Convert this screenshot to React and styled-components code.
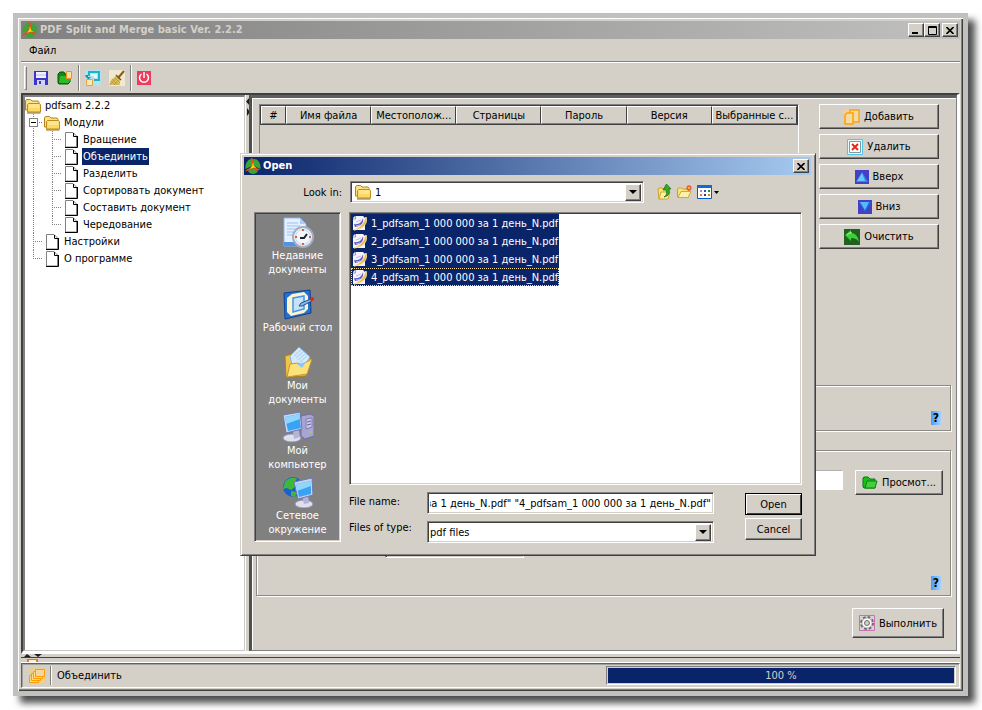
import { useEffect, useRef, useState } from "react";
import styled, { createGlobalStyle, css } from "styled-components";

const tree = [
  { name: "Модули", level: 1, folder: true },
  { name: "Вращение", level: 2 },
  { name: "Объединить", level: 2 },
  { name: "Разделить", level: 2 },
  { name: "Сортировать документ", level: 2 },
  { name: "Составить документ", level: 2 },
  { name: "Чередование", level: 2, last: true },
  { name: "Настройки", level: 1 },
  { name: "О программе", level: 1, last: true },
];

const columns = [
  "#",
  "Имя файла",
  "Местополож...",
  "Страницы",
  "Пароль",
  "Версия",
  "Выбранные с...",
];

const files = [1, 2, 3, 4].map((n) => `${n}_pdfsam_1 000 000 за 1 день_N.pdf`);

/* ---------- icons ---------- */

const Logo = () => (
  <svg width="16" height="16" viewBox="0 0 16 16">
    <path d="M7 1C3 1 0 5 .5 11L7 8zM9 1c4 0 7 4 6.500 10L9 8zM3 13c2 4 8 4 10 0L8 9.500z" fill="#3fa336" />
    <path d="M5.500 .5c2-.5 3.500 0 3.500 2V7l1 2 5 2.500c-2 1.500-4 1-5 .5L8 10l-3 2.500c-2 0-3.500 0-4.500 1.500C.5 12 2 11 4 10.500L6.500 8 7 3c0-1-.5-2-1.500-2.500z" fill="#d9531a" />
    <path d="M8 4l.8 4 2.700 2-3-.6L5 11l2.200-3z" fill="#ffe800" />
  </svg>
);

const Folder = () => (
  <svg width="16" height="16" viewBox="0 0 16 16">
    <path d="M.5 12V3l1-1.500h4L7 3h6l1 1.500V12z" fill="#fbe28a" stroke="#b08416" />
    <path d="M2.500 14V6.500l1-1H14l1.500 1V14z" fill="#fdd865" stroke="#c08d18" />
    <path d="M4 7h10.500M4 9h10.500" stroke="#fff3b8" />
    <path d="M2 15h13.500" stroke="#8c6a1c" />
  </svg>
);

const Page = () => (
  <svg width="16" height="16" viewBox="0 0 16 16">
    <path d="M2.500 15V.5H10l3.500 3.500v11z" fill="#fff" stroke="#808080" />
    <path d="M10.500 1v3.500h3.500M14.500 4v11.500H2" fill="none" stroke="#000" />
  </svg>
);

const Save = () => (
  <svg width="16" height="16" viewBox="0 0 16 16">
    <path d="M1 1h14v14H1z" fill="#3c35c8" />
    <path d="M3 2h10v6H3z" fill="#eef0ff" />
    <path d="M4 10h8v5H4z" fill="#cfd4f4" />
    <path d="M6 11h2v3H6z" fill="#3c35c8" />
    <path d="M3 5h10" stroke="#b8bcec" />
  </svg>
);

const OpenEnv = () => (
  <svg width="16" height="16" viewBox="0 0 16 16">
    <path d="M1 4l2-2h4l1 2h5v8l-2 2H2l-1-1z" fill="#0f8a12" stroke="#06570a" />
    <path d="M3 6h11l-2 7H2z" fill="#2fb82a" />
    <path d="M9.500 1.500h5v7h-5z" fill="#fbe0a8" stroke="#ff8c1a" />
  </svg>
);

const Restore = () => (
  <svg width="16" height="16" viewBox="0 0 16 16">
    <path d="M0 0h16v16H0z" fill="#b4e2e6" />
    <path d="M3 1h12v10H9V9h4V3H5v3H3z" fill="#19b4d0" />
    <path d="M6 4h6v4H9V6H6z" fill="#e2f8fa" />
    <path d="M1 5h2v2h3L3.500 9.500 0 6z" fill="#1e8fb8" />
    <path d="M1.500 9.500h6v6h-6z" fill="#fbe6bc" stroke="#e8a23a" />
  </svg>
);

const Broom = () => (
  <svg width="16" height="16" viewBox="0 0 16 16">
    <path d="M0 0h16v16H0z" fill="#efe9d0" />
    <path d="M15 1l-6 7" stroke="#8a5a18" strokeWidth="2" />
    <path d="M7 6l4 4v5H0l2-5z" fill="#dcc05c" />
    <path d="M7 5l5 5" stroke="#7a5410" strokeWidth="1.500" />
    <path d="M3 9l6 6M2 11l4 4M6 8l5 5M1 15l6-7M5 15l4-5" stroke="#a8893a" strokeWidth=".6" />
  </svg>
);

const Power = () => (
  <svg width="14" height="14" viewBox="0 0 14 14">
    <path d="M0 0h14v14H0z" fill="#ee3a5c" />
    <path d="M4.500 3a4.500 4.500 0 1 0 5 0M7 1v6" fill="none" stroke="#fff" strokeWidth="1.500" />
  </svg>
);

const AddIcon = () => (
  <svg width="16" height="16" viewBox="0 0 16 16">
    <path d="M0 0h8v8H0z" fill="#f5cda0" />
    <path d="M6 1h9v12H6z" fill="#f3dba4" stroke="#f7a21b" strokeWidth="1.500" />
    <path d="M1 6l2-2h6v11H1z" fill="#f3dba4" stroke="#ffa200" strokeWidth="1.500" />
  </svg>
);

const RemoveIcon = () => (
  <svg width="16" height="16" viewBox="0 0 16 16">
    <path d="M.5.5h15v15H.5z" fill="#e8fafc" stroke="#4fc6e6" />
    <path d="M2.500 2.500h11v11h-11z" fill="#fff" stroke="#7f9aa2" />
    <path d="M5 5l6 6M11 5l-6 6" stroke="#e8281e" strokeWidth="2" />
  </svg>
);

const UpIcon = () => (
  <svg width="14" height="14" viewBox="0 0 14 14">
    <path d="M0 0h14v14H0z" fill="#4340c4" />
    <path d="M7 2l6 10H1z" fill="#2d8cf0" />
    <path d="M7 3l3 8H2z" fill="#6cc4fc" />
  </svg>
);

const DownIcon = () => (
  <svg width="14" height="14" viewBox="0 0 14 14">
    <path d="M0 0h14v14H0z" fill="#4340c4" />
    <path d="M7 12l6-10H1z" fill="#1d6fe0" />
    <path d="M7 10L2 2h9z" fill="#5ab8fa" />
  </svg>
);

const ClearIcon = () => (
  <svg width="16" height="16" viewBox="0 0 16 16">
    <path d="M0 0h16v16H0z" fill="#22601f" />
    <path d="M1 6l6-5v3c4 0 7 3 8 9-2-3-4-4-8-4v3z" fill="#3ccf3a" />
    <path d="M3 6l4-3v2" stroke="#a4f49a" fill="none" />
  </svg>
);

const BrowseIcon = () => (
  <svg width="16" height="16" viewBox="0 0 16 16">
    <path d="M1 3l1-1h4l2 2h5v9H2l-1-1z" fill="#16c016" stroke="#0a7a10" />
    <path d="M5 6h10l-2 7H3z" fill="#45ce3c" stroke="#0b8212" />
  </svg>
);

const GearIcon = () => (
  <svg width="16" height="16" viewBox="0 0 16 16">
    <path d="M.5.5h15v15H.5z" fill="#d9d3d6" stroke="#cc6fb4" />
    <circle cx="8" cy="8" r="6" fill="none" stroke="#6a6a6a" strokeWidth="2" strokeDasharray="2.700 2" />
    <circle cx="8" cy="8" r="5" fill="#fff" stroke="#8a8a8a" strokeWidth=".6" />
    <circle cx="8" cy="8" r="2.500" fill="#d4d0c8" stroke="#6a6a6a" />
  </svg>
);

const StatusIcon = () => (
  <svg width="16" height="16" viewBox="0 0 16 16">
    <path d="M0 0h16v16H0z" fill="#ead08a" />
    <path d="M.5 7.500h9v7h-9z" fill="#ffd98a" stroke="#ff9d00" />
    <path d="M2.500 5.500h9v7h-9z" fill="#ffd98a" stroke="#ff9d00" />
    <path d="M4.500 3.500h9v7h-9z" fill="#ffd98a" stroke="#ff9d00" />
    <path d="M6.500 1.500h9v7h-9z" fill="#f5d6a0" stroke="#ff9d00" />
  </svg>
);

const PdfIcon = () => (
  <svg width="16" height="16" viewBox="0 0 16 16">
    <path d="M3 1h8l2 2v12H1V3z" fill="#f4f2fb" />
    <path d="M3.500 1v3H1" fill="none" stroke="#9a97b8" />
    <path d="M14 2c2 6-2 12-12 13 7-3 10-7 12-13z" fill="#e9b84a" stroke="#f8e49a" />
    <path d="M2 9c5 1 8-2 9-6 1 5-2 8-8 9z" fill="#5f55bc" />
    <path d="M4 7l5-2M4 11l4-1" stroke="#c3b8ec" />
  </svg>
);

const UpFolder = () => (
  <svg width="16" height="16" viewBox="0 0 16 16">
    <path d="M1 5l1-1h3l1 1h6l-1 9-9 1z" fill="#fbe37c" stroke="#c9a02c" />
    <path d="M2 15l2-7h9l-2 7z" fill="#fdf0a8" stroke="#d2a92e" />
    <path d="M7 13c3-2 3-4 2-7H6l3.500-6L14 5h-2c1 4 0 7-5 8z" fill="#34a82b" stroke="#14700f" strokeWidth=".7" />
  </svg>
);

const NewFolder = () => (
  <svg width="16" height="16" viewBox="0 0 16 16">
    <path d="M.5 5l1-1h3l1 1h6v8H.5z" fill="#fbe37c" stroke="#c9a02c" />
    <path d="M1 13.500l3-6h10l-3 6z" fill="#fdf0a8" stroke="#d2a92e" />
    <path d="M12 1v6M9 4h6M10 2l4 4M14 2l-4 4" stroke="#f0512c" strokeWidth="1.200" />
    <circle cx="12" cy="4" r="1" fill="#ffd24a" />
  </svg>
);

const ViewIcon = () => (
  <svg width="22" height="16" viewBox="0 0 22 16">
    <path d="M.5 1.500h14v13H.5z" fill="#fff" stroke="#0a57c8" />
    <path d="M0 1h15v3H0z" fill="#1468d8" />
    <path d="M3 6h2v2H3z" fill="#9c8cc8" />
    <path d="M7 6h2v2H7z" fill="#2c50b8" />
    <path d="M11 6h2v2h-2z" fill="#1c8c2c" />
    <path d="M3 10h2v2H3z" fill="#f0704c" />
    <path d="M7 10h2v2H7z" fill="#1d3c9c" />
    <path d="M11 10h2v2h-2z" fill="#c89018" />
    <path d="M17 7h5l-2.500 3z" fill="#000" />
  </svg>
);

const RecentIcon = () => (
  <svg width="32" height="32" viewBox="0 0 32 32">
    <path d="M2 2h16l6 6v22H2z" fill="#e4f0fd" stroke="#8fb5e8" />
    <path d="M18 2v6h6z" fill="#a9cdf6" />
    <path d="M5 7h11M5 10h13M5 13h10M5 16h8M5 19h7" stroke="#9cc0ee" />
    <path d="M2 26h18v4H2z" fill="#4f93e4" />
    <circle cx="21" cy="21" r="10" fill="#f2f6fb" stroke="#a3afc0" strokeWidth="2" />
    <circle cx="21" cy="21" r="7.500" fill="none" stroke="#bcd6f2" />
    <path d="M18 22h4l3-4" fill="none" stroke="#1c2430" strokeWidth="2" />
    <path d="M21 13v2M21 27v2M13 21h2M27 21h2" stroke="#e05a32" strokeWidth="2" />
  </svg>
);

const DesktopIcon = () => (
  <svg width="32" height="32" viewBox="0 0 32 32">
    <path d="M2 5l26-3 1 23-26 6z" fill="#2372d2" stroke="#0e3f92" />
    <path d="M5 10l5-4 12-2 4 4v13l-4 4-13 3-4-4z" fill="#fdf3cd" />
    <path d="M11 10l11-2v13l-11 3z" fill="#c4e2fb" stroke="#4697e6" strokeWidth="1.500" />
    <path d="M17 18l2-3 10-4 1 2-10 5z" fill="#7fbaf0" stroke="#234f88" />
    <circle cx="30" cy="11" r="2" fill="#d8281c" />
  </svg>
);

const DocsIcon = () => (
  <svg width="32" height="32" viewBox="0 0 32 32">
    <path d="M3 10l7-2 4 2 15 3-5 17-20 1z" fill="#f2c448" stroke="#a9811d" />
    <path d="M8 10l9-9 11 10-7 11-11-3z" fill="#d4eafc" stroke="#7fb3e6" />
    <path d="M12 10l7-6M14 12l7-6M16 14l7-6M18 16l7-6" stroke="#a4cdf4" />
    <path d="M5 31l3-13 8-1 3 2 11-6-5 15z" fill="#fde27c" stroke="#c79a28" />
    <path d="M15 18l9-2-4 6z" fill="#8cc7f5" />
  </svg>
);

const ComputerIcon = () => (
  <svg width="32" height="32" viewBox="0 0 32 32">
    <path d="M19 5l9-2 4 2v20l-9 3-4-3z" fill="#a9a4d4" stroke="#716ca4" />
    <path d="M24 8l6-1v9l-6 2z" fill="#ccc9ea" stroke="#7f7ab2" />
    <path d="M25 11l4-1M25 14l4-1" stroke="#625d96" />
    <circle cx="29" cy="21" r="1" fill="#8bea38" />
    <ellipse cx="10" cy="27" rx="9" ry="4" fill="#dfe0ee" stroke="#8f90b0" />
    <path d="M11 20l6-1 1 7-6 2z" fill="#b5b4d8" />
    <path d="M1 4l17-3 2 17-16 4z" fill="#c7d4ee" stroke="#6d79ac" />
    <path d="M3 6l14-3 2 14-13 3z" fill="#3aa2f5" />
    <path d="M3 6l14-3 1 5-14 5z" fill="#8ed6fb" />
  </svg>
);

const NetworkIcon = () => (
  <svg width="32" height="32" viewBox="0 0 32 32">
    <circle cx="11" cy="11" r="10" fill="#1b5fd0" />
    <path d="M3 6c4-5 9-5 12-3l-3 4 2 3-5 4-4-2-4 1zM9 15l6 1-2 5-4-1z" fill="#3fb83a" />
    <ellipse cx="22" cy="28" rx="9" ry="4" fill="#dfe0ee" stroke="#8f90b0" />
    <path d="M20 20l6-1 1 8-5 1z" fill="#b5b4d8" />
    <path d="M12 6l18-4 1 17-15 4z" fill="#c7d4ee" stroke="#6d79ac" />
    <path d="M14 8l15-3v13l-12 3z" fill="#3aa2f5" />
    <path d="M14 8l15-3v5l-14 5z" fill="#8ed6fb" />
  </svg>
);

const Cross = () => (
  <svg width="8" height="7" viewBox="0 0 8 7">
    <path d="M.5 0l7 7M7.500 0l-7 7" stroke="#000" strokeWidth="1.600" />
  </svg>
);

const places = [
  { name: ["Недавние", "документы"], icon: <RecentIcon />, space: true },
  { name: ["Рабочий стол"], icon: <DesktopIcon />, space: true },
  { name: ["Мои", "документы"], icon: <DocsIcon /> },
  { name: ["Мой", "компьютер"], icon: <ComputerIcon /> },
  { name: ["Сетевое", "окружение"], icon: <NetworkIcon /> },
];

const actions = [
  { name: "Добавить", icon: <AddIcon /> },
  { name: "Удалить", icon: <RemoveIcon /> },
  { name: "Вверх", icon: <UpIcon /> },
  { name: "Вниз", icon: <DownIcon /> },
  { name: "Очистить", icon: <ClearIcon /> },
];

function OpenDialog() {
  const nameRef = useRef(null);
  const [fileName, setFileName] = useState(
    'за 1 день_N.pdf" "4_pdfsam_1 000 000 за 1 день_N.pdf"'
  );

  // keep the end of a long name in view
  useEffect(() => {
    nameRef.current.scrollLeft = nameRef.current.scrollWidth;
  }, []);

  return (
    <Dialog role="dialog" aria-label="Open">
      <TitleBar $active>
        <Logo />
        <Title $active>Open</Title>
        <TitleButton aria-label="Close">
          <Cross />
        </TitleButton>
      </TitleBar>
      <LookRow>
        <LookLabel htmlFor="look">Look in:</LookLabel>
        <LookCombo>
          <Folder />
          <Select id="look">
            <option>1</option>
          </Select>
          <Arrow />
        </LookCombo>
        <LookTools>
          <IconButton aria-label="Up one level">
            <UpFolder />
          </IconButton>
          <IconButton aria-label="New folder">
            <NewFolder />
          </IconButton>
          <IconButton aria-label="View">
            <ViewIcon />
          </IconButton>
        </LookTools>
      </LookRow>
      <DialogBody>
        <Places>
          {places.map((place) => (
            <Place key={place.name[0]} $space={place.space}>
              {place.icon}
              {place.name.map((line) => (
                <span key={line}>{line}</span>
              ))}
            </Place>
          ))}
        </Places>
        <DialogMain>
          <FileList>
            {files.map((file, i) => (
              <File key={file} $focus={i === 3}>
                <PdfIcon />
                {file}
              </File>
            ))}
          </FileList>
          <Fields>
            <Labels>
              <label htmlFor="fname">File name:</label>
              <label htmlFor="ftype">Files of type:</label>
            </Labels>
            <Combos>
              <Combo>
                <Input
                  id="fname"
                  ref={nameRef}
                  value={fileName}
                  onChange={(e) => setFileName(e.target.value)}
                />
              </Combo>
              <Combo>
                <Select id="ftype">
                  <option>pdf files</option>
                </Select>
                <Arrow />
              </Combo>
            </Combos>
            <DialogButtons>
              <DialogButton $main>Open</DialogButton>
              <DialogButton>Cancel</DialogButton>
            </DialogButtons>
          </Fields>
        </DialogMain>
      </DialogBody>
    </Dialog>
  );
}

export default function App() {
  const [selected, setSelected] = useState("Объединить");

  return (
    <>
      <GlobalStyle />
      <Window>
        <TitleBar>
          <Logo />
          <Title>PDF Split and Merge basic Ver. 2.2.2</Title>
          <TitleButton aria-label="Minimize">
            <svg width="8" height="8" viewBox="0 0 8 8">
              <path d="M0 6h6v2H0z" />
            </svg>
          </TitleButton>
          <TitleButton aria-label="Maximize">
            <svg width="9" height="9" viewBox="0 0 9 9">
              <path d="M.5.5h8v8h-8zM0 1.500h9" fill="none" stroke="#000" />
            </svg>
          </TitleButton>
          <TitleButton aria-label="Close" $apart>
            <Cross />
          </TitleButton>
        </TitleBar>
        <Menu>
          <MenuItem>Файл</MenuItem>
        </Menu>
        <Toolbar>
          <Grip />
          <IconButton aria-label="Save">
            <Save />
          </IconButton>
          <IconButton aria-label="Load">
            <OpenEnv />
          </IconButton>
          <Separator />
          <IconButton aria-label="Restore">
            <Restore />
          </IconButton>
          <IconButton aria-label="Clear log">
            <Broom />
          </IconButton>
          <Separator />
          <IconButton aria-label="Exit">
            <Power />
          </IconButton>
        </Toolbar>
        <Main>
          <Tree>
            <Node>
              <Folder />
              <NodeLabel>pdfsam 2.2.2</NodeLabel>
            </Node>
            {tree.map((node) => (
              <Node key={node.name}>
                <Guide $branch={node.level === 1} $last={node.last && node.level === 1}>
                  {node.folder && <Expander />}
                </Guide>
                {node.level === 2 && <Guide $branch $last={node.last} />}
                {node.folder ? <Folder /> : <Page />}
                <NodeLabel
                  $selected={selected === node.name}
                  onClick={() => setSelected(node.name)}
                >
                  {node.name}
                </NodeLabel>
              </Node>
            ))}
          </Tree>
          <Divider>
            <svg width="5" height="20" viewBox="0 0 5 20">
              <path d="M4 0v9L0 4.500zM1 11v8l3-4z" fill="#202020" />
            </svg>
          </Divider>
          <Pane>
            <Work>
              <TableBox>
                <Table>
                  <thead>
                    <tr>
                      {columns.map((column) => (
                        <th key={column}>{column}</th>
                      ))}
                    </tr>
                  </thead>
                </Table>
              </TableBox>
              <Actions>
                {actions.map((action) => (
                  <Button key={action.name}>
                    {action.icon}
                    {action.name}
                  </Button>
                ))}
              </Actions>
            </Work>
            <Group>
              <Help>?</Help>
            </Group>
            <Group $big>
              <OutputRow>
                <Output aria-label="PDF" />
                <Button>
                  <BrowseIcon />
                  Просмот...
                </Button>
              </OutputRow>
              <VersionBox>
                <Select aria-label="Version" />
                <Arrow />
              </VersionBox>
              <Help>?</Help>
            </Group>
            <RunButton>
              <GearIcon />
              Выполнить
            </RunButton>
          </Pane>
        </Main>
        <LogBar>
          <svg width="20" height="9" viewBox="0 0 20 9">
            <path d="M0 3l3-3 4 3zM10 0h8l-4 3z" fill="#202020" />
            <path d="M3 5h11v3H3z" fill="#f0741c" />
            <path d="M5 6h7v2H5z" fill="#fff2c0" />
          </svg>
        </LogBar>
        <Status>
          <StatusIcon />
          <StatusSeparator />
          <span>Объединить</span>
          <Progress role="progressbar" aria-valuenow={100}>
            100 %
          </Progress>
        </Status>
        <OpenDialog />
      </Window>
    </>
  );
}

const GlobalStyle = createGlobalStyle`
  * {
    box-sizing: border-box;
  }

  body {
    margin: 0;
    background: #fff;
  }

  body,
  button,
  input,
  select {
    font-family: "DejaVu Sans Condensed", "DejaVu Sans", sans-serif;
    font-size: 11px;
    color: #000;
  }

  svg {
    display: block;
    flex: none;
  }

  ul {
    margin: 0;
    padding: 0;
    list-style: none;
  }
`;

const raised = css`
  border: 1px solid;
  border-color: #fff #404040 #404040 #fff;
  box-shadow: inset -1px -1px #808080;
  background: #d4d0c8;
`;

const sunken = css`
  border: 1px solid;
  border-color: #808080 #fff #fff #808080;
  box-shadow: inset 1px 1px #404040, inset -1px -1px #d4d0c8;
  background: #fff;
`;

const etched = css`
  border: 1px solid #8c8a84;
  box-shadow: 1px 1px #fff, inset 1px 1px #fff;
`;

const Window = styled.div`
  position: relative;
  min-height: calc(100vh - 27px);
  margin: 13px 14px 14px 13px;
  padding: 3px;
  display: flex;
  flex-direction: column;
  background: #d4d0c8;
  border: 5px solid #c0c0c0;
  box-shadow: inset 1px 1px #fff, inset -1px -1px #404040,
    inset -2px -2px #808080, 7px 7px 7px rgba(0, 0, 0, 0.7);
`;

const TitleBar = styled.div`
  height: 18px;
  padding: 0 2px 0 1px;
  display: flex;
  align-items: center;
  background: ${(props) =>
    props.$active
      ? "linear-gradient(90deg, #0a246a, #a6caf0)"
      : "linear-gradient(90deg, #808080, #c0c0c0)"};
`;

const Title = styled.h1`
  flex: 1;
  margin: 0 0 0 2px;
  font-size: 11px;
  line-height: 18px;
  font-weight: 700;
  color: ${(props) => (props.$active ? "#fff" : "#d4d0c8")};
`;

const TitleButton = styled.button`
  ${raised}
  width: 16px;
  height: 14px;
  margin-left: ${(props) => (props.$apart ? "2px" : "0")};
  padding: 0;
  display: flex;
  align-items: center;
  justify-content: center;
`;

const Menu = styled.nav`
  height: 23px;
  padding: 0 8px;
  display: flex;
  align-items: center;
  border-bottom: 1px solid #808080;
`;

const MenuItem = styled.button`
  padding: 0;
  border: none;
  background: none;
`;

const Toolbar = styled.div`
  height: 31px;
  padding: 0 4px 0 3px;
  display: flex;
  align-items: center;
  gap: 8px;
  border-top: 1px solid #fff;
`;

const Grip = styled.span`
  width: 3px;
  height: 24px;
  margin-right: -2px;
  border: 1px solid;
  border-color: #fff #808080 #808080 #fff;
`;

const Separator = styled.span`
  width: 2px;
  height: 26px;
  margin: 0 -3px;
  border-left: 1px solid #808080;
  border-right: 1px solid #fff;
`;

const IconButton = styled.button`
  padding: 0;
  border: none;
  background: none;
`;

const Main = styled.main`
  flex: 1;
  display: flex;
  border: solid;
  border-width: 2px 3px 3px 2px;
  border-color: #404040 #fff #fff #404040;
`;

const Tree = styled.ul`
  width: 222px;
  border: solid;
  border-width: 2px 1px 1px 2px;
  border-color: #808080 #c8c8c8 #c8c8c8 #808080;
  background: #fff;
`;

const Node = styled.li`
  height: 17px;
  display: flex;
  align-items: center;
`;

const dots = "#808080 0 1px, transparent 1px 2px";

const Guide = styled.span`
  width: 19px;
  height: 17px;
  padding: 4px;
  background: repeating-linear-gradient(${dots}) 8px 0 / 1px
      ${(props) => (props.$last ? "9px" : "100%")} no-repeat
      ${(props) =>
        props.$branch
          ? `, repeating-linear-gradient(90deg, ${dots}) 8px 8px / 10px 1px no-repeat`
          : ""};
`;

const Expander = styled.span`
  width: 9px;
  height: 9px;
  display: block;
  border: 1px solid #808080;
  background: linear-gradient(#000, #000) center / 5px 1px no-repeat #fff;
`;

const NodeLabel = styled.span`
  margin-left: 3px;
  padding: 0 1px;
  line-height: 17px;
  white-space: nowrap;
  cursor: default;
  color: ${(props) => (props.$selected ? "#fff" : "#000")};
  background: ${(props) => (props.$selected ? "#0a246a" : "none")};
`;

const Divider = styled.div`
  width: 5px;
  padding-top: 2px;
  border-left: 1px solid #fff;
  background: #d4d0c8;
`;

const Pane = styled.section`
  flex: 1;
  min-width: 0;
  margin-left: -1px;
  padding: 6px 5px 12px 4px;
  display: flex;
  flex-direction: column;
  border: solid;
  border-width: 3px 1px 1px 3px;
  border-color: #606060 #808080 #808080 #505050;
  background: #d4d0c8;
  box-shadow: inset 1px 1px #fff;
`;

const Work = styled.div`
  flex: 1;
  min-height: 281px;
  padding: 0 12px 4px 3px;
  display: flex;
  gap: 20px;
`;

const TableBox = styled.div`
  flex: 1;
  min-width: 0;
  border: solid 1px;
  border-color: #808080 #fff #fff #808080;
`;

const Table = styled.table`
  width: 100%;
  table-layout: fixed;
  border-collapse: separate;
  border-spacing: 0;
  border: 1px solid #404040;

  th {
    height: 18px;
    padding: 0 2px;
    border: 1px solid;
    border-color: #fff #404040 #808080 #fff;
    font-weight: 400;
    white-space: nowrap;
    overflow: hidden;
  }

  th:first-child {
    width: 25px;
  }
`;

const Actions = styled.div`
  width: 120px;
  display: flex;
  flex-direction: column;
  gap: 5px;
`;

const Button = styled.button`
  ${raised}
  height: 25px;
  padding: 0 6px;
  display: flex;
  align-items: center;
  justify-content: center;
  gap: 4px;
  white-space: nowrap;
`;

const RunButton = styled(Button)`
  align-self: flex-end;
  width: 92px;
  height: 30px;
  margin: 12px 7px 0 0;
`;

const Group = styled.section`
  ${etched}
  height: ${(props) => (props.$big ? "146px" : "46px")};
  margin-top: ${(props) => (props.$big ? "19px" : "0")};
  padding: ${(props) => (props.$big ? "19px 7px 5px" : "0 7px 5px")};
  display: flex;
  flex-direction: column;
  justify-content: ${(props) => (props.$big ? "space-between" : "flex-end")};
`;

const Help = styled.button`
  align-self: flex-end;
  width: 10px;
  height: 14px;
  margin-right: 2px;
  padding: 0;
  border: none;
  background: linear-gradient(90deg, #4a9cf5, #a8d2ff);
  font-size: 12px;
  line-height: 14px;
  font-weight: 700;
`;

const OutputRow = styled.div`
  display: flex;
  align-items: flex-start;
  gap: 12px;

  ${Button} {
    width: 88px;
  }
`;

const Output = styled.input`
  flex: 1;
  min-width: 0;
  height: 20px;
  border: 1px solid;
  border-color: #b0b0b0 #fff #fff #b0b0b0;
  background: #fff;
`;

const Combo = styled.div`
  ${sunken}
  height: 22px;
  padding: 2px;
  display: flex;
  align-items: center;
  min-width: 0;
`;

const VersionBox = styled(Combo)`
  width: 139px;
  margin: 22px 0 0 121px;
`;

const Select = styled.select`
  flex: 1;
  min-width: 0;
  padding: 0;
  border: none;
  outline: none;
  appearance: none;
  background: none;
`;

const Input = styled.input`
  width: 100%;
  min-width: 0;
  padding: 0;
  border: none;
  outline: none;
  background: none;
`;

const Arrow = styled.span`
  ${raised}
  width: 16px;
  height: 17px;
  display: flex;
  align-items: center;
  justify-content: center;
  pointer-events: none;

  &::after {
    content: "";
    border: 4px solid transparent;
    border-top-color: #000;
    border-bottom: none;
  }
`;

const LogBar = styled.div`
  height: 9px;
  padding-left: 3px;
  background: linear-gradient(#d4d0c8 3px, #404040 3px 4px, #d4d0c8 4px 8px, #fff 8px);
`;

const Status = styled.footer`
  height: 25px;
  padding: 2px 3px 2px 7px;
  display: flex;
  align-items: center;
  gap: 5px;
  border: 1px solid;
  border-color: #606060 #fff #fff #606060;
  box-shadow: inset 1px 1px #a0a0a0;
`;

const StatusSeparator = styled(Separator)`
  height: 19px;
  margin: 0;
`;

const Progress = styled.div`
  width: 350px;
  height: 19px;
  margin-left: auto;
  border: 1px solid;
  border-color: #808080 #fff #fff #808080;
  box-shadow: inset 0 0 0 1px #d4d0c8;
  background: #0a246a;
  color: #d4d0c8;
  line-height: 17px;
  text-align: center;
`;

const Dialog = styled.div`
  position: absolute;
  top: 135px;
  left: 222px;
  width: 576px;
  padding: 3px 4px 12px 3px;
  border: 1px solid;
  border-color: #d4d0c8 #404040 #404040 #d4d0c8;
  background: #d4d0c8;
  box-shadow: inset 1px 1px #fff, inset -1px -1px #808080;
`;

const LookRow = styled.div`
  margin: 6px 0 9px;
  display: flex;
  align-items: center;
`;

const LookLabel = styled.label`
  width: 98px;
  text-align: right;
`;

const LookCombo = styled(Combo)`
  width: 294px;
  margin-left: 8px;
  padding-left: 4px;
  gap: 4px;
`;

const LookTools = styled.div`
  margin-left: 13px;
  display: flex;
  gap: 4px;
`;

const DialogBody = styled.div`
  padding: 0 9px 0 10px;
  display: flex;
  gap: 8px;
`;

const Places = styled.ul`
  ${sunken}
  width: 87px;
  height: 330px;
  padding-top: 3px;
  background: #808080;
`;

const Place = styled.li`
  padding-bottom: ${(props) => (props.$space ? "11px" : "4px")};
  display: flex;
  flex-direction: column;
  align-items: center;
  color: #fff;
  line-height: 14px;

  svg {
    margin-bottom: 1px;
  }
`;

const DialogMain = styled.div`
  flex: 1;
  min-width: 0;
  display: flex;
  flex-direction: column;
`;

const FileList = styled.ul`
  ${sunken}
  height: 273px;
  padding: 1px;
`;

const File = styled.li`
  width: fit-content;
  height: 18px;
  padding: 0 1px;
  display: flex;
  align-items: center;
  gap: 3px;
  background: #0a246a;
  color: #fff;
  white-space: pre;
  outline: ${(props) => (props.$focus ? "1px dotted #f5db95" : "none")};
  outline-offset: -1px;
`;

const Fields = styled.div`
  margin-top: 7px;
  display: flex;
`;

const Labels = styled.div`
  width: 78px;
  padding-top: 3px;
  display: flex;
  flex-direction: column;
  gap: 12px;
  line-height: 14px;
`;

const Combos = styled.div`
  flex: 1;
  min-width: 0;
  margin-right: 31px;
  display: flex;
  flex-direction: column;
  gap: 7px;
`;

const DialogButtons = styled.div`
  width: 57px;
  padding-top: 1px;
  display: flex;
  flex-direction: column;
  gap: 3px;
`;

const DialogButton = styled.button`
  ${raised}
  height: 22px;
  padding: 0;
  ${(props) =>
    props.$main &&
    css`
      border-color: #000;
      box-shadow: inset 1px 1px #fff, inset -1px -1px #404040;
    `}
`;
